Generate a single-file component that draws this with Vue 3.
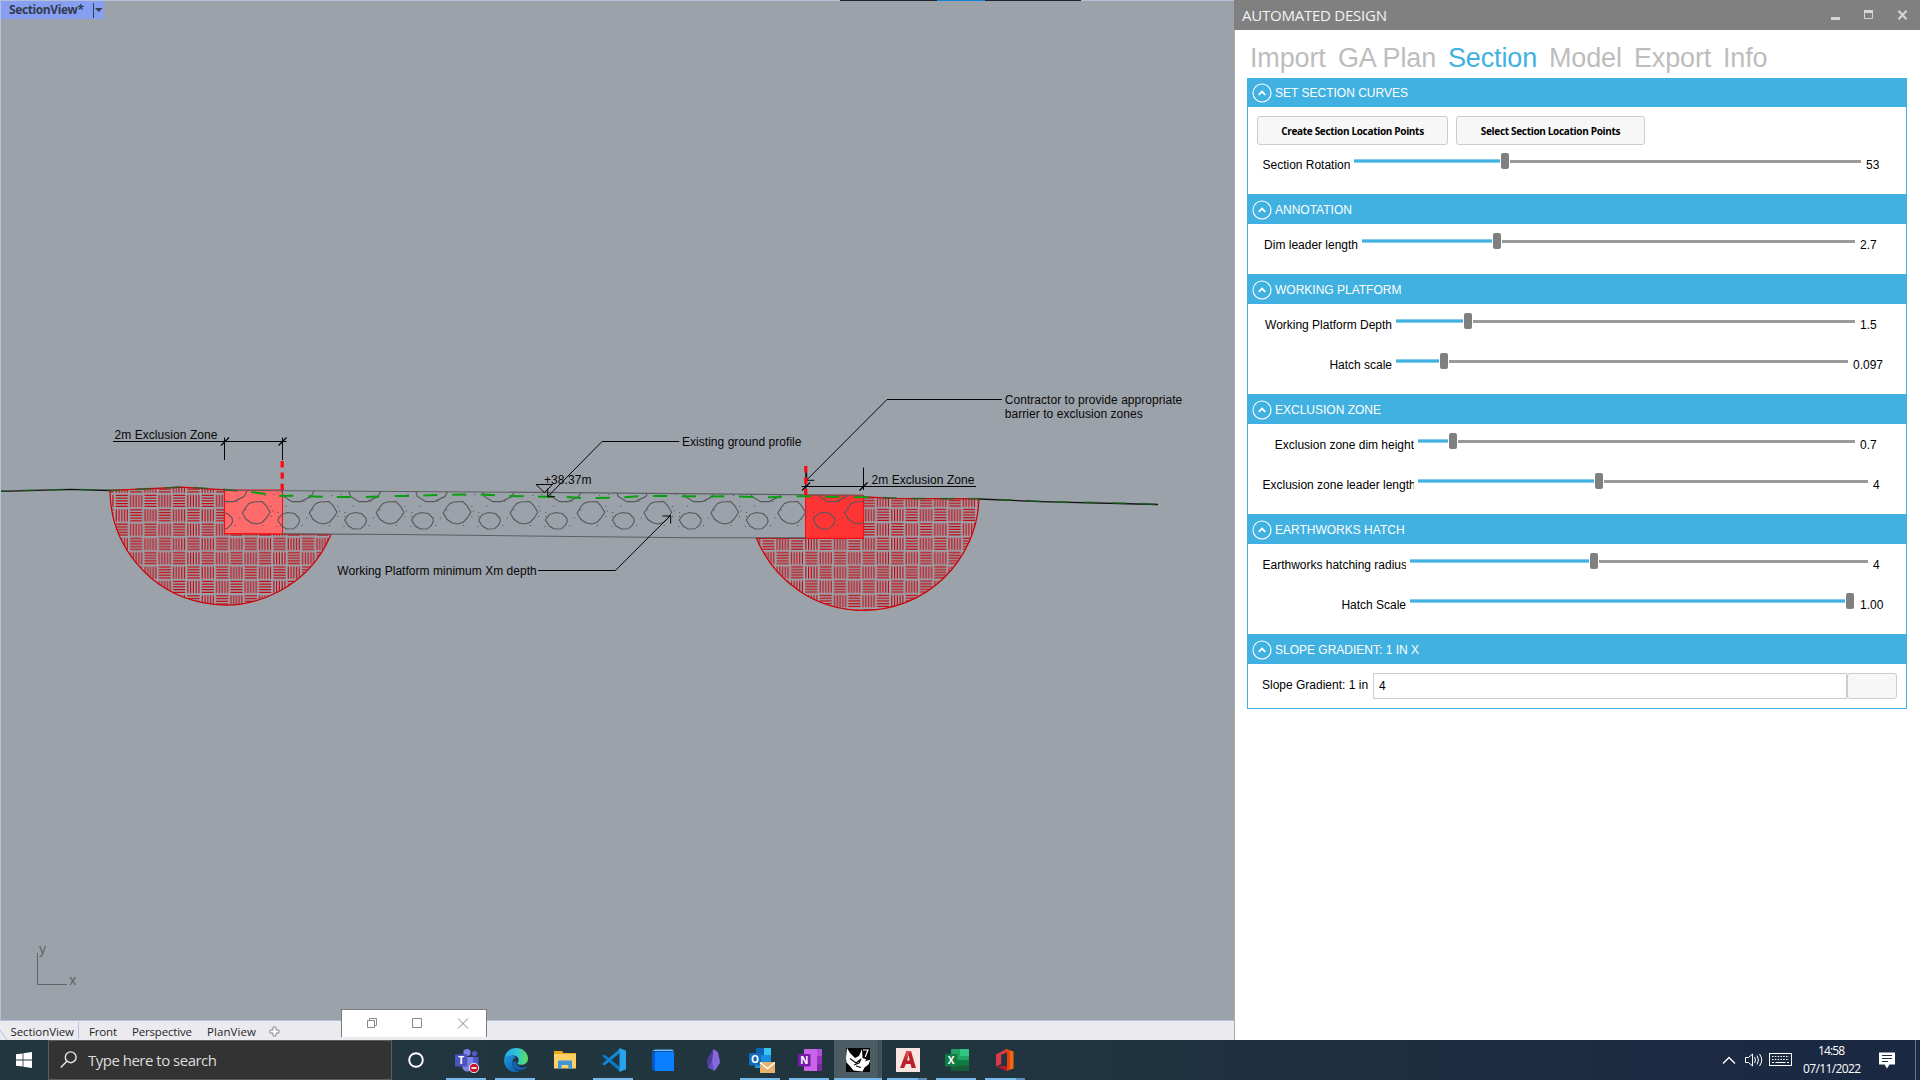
<script setup>
const tabs = [
  { name: 'Import', w: 88 }, { name: 'GA Plan', w: 110 }, { name: 'Section', w: 101, active: true },
  { name: 'Model', w: 85 }, { name: 'Export', w: 89 }, { name: 'Info', w: 60 },
]
// lw: width of the label column, track: slider length, at: thumb centre
const groups = [
  { title: 'SET SECTION CURVES', buttons: true, rows: [{ label: 'Section Rotation', lw: 106, track: 507, at: 151, value: '53' }] },
  { title: 'ANNOTATION', rows: [{ label: 'Dim leader length', lw: 114, track: 493, at: 135, value: '2.7' }] },
  { title: 'WORKING PLATFORM', rows: [
    { label: 'Working Platform Depth', lw: 148, track: 459, at: 72, value: '1.5' },
    { label: 'Hatch scale', lw: 148, track: 452, at: 48, value: '0.097' }] },
  { title: 'EXCLUSION ZONE', rows: [
    { label: 'Exclusion zone dim height', lw: 170, track: 437, at: 35, value: '0.7' },
    { label: 'Exclusion zone leader length', lw: 170, track: 450, at: 181, value: '4' }] },
  { title: 'EARTHWORKS HATCH', rows: [
    { label: 'Earthworks hatching radius', lw: 162, track: 458, at: 184, value: '4' },
    { label: 'Hatch Scale', lw: 162, track: 445, at: 440, value: '1.00' }] },
  { title: 'SLOPE GRADIENT: 1 IN X', slope: true, rows: [] },
]
const views = [{ name: 'Front', w: 28, ml: 10 }, { name: 'Perspective', w: 60, ml: 15 }, { name: 'PlanView', w: 49, ml: 15 }]
const tile = 28.67
const five = [0, 1, 2, 3, 4].map(i => 1.3 + i * 2.75)
const h = tile / 2
const stones = Array.from({ length: 11 }, (_, i) => 214.6 + i * 66.93)
const dots = [[22, 11], [59, 4], [57.5, 20.5], [4, 15.5], [-11, 26], [31, 19.5], [63, 26], [24.5, 27.5], [20, 35], [47.5, 35], [-4, 22], [56, 16], [50, 5], [-5, 36]]
const bright = [
  'M251.3 492l14.3 2', 'M279.3 496l14-.3', 'M308.3 496.3l14.4.4', 'M336.7 497h14', 'M365.7 497l13.6-.6', 'M394.7 496H409',
  'M423.3 495.6l14-.6', 'M452 494.8l14-.4', 'M480.7 494.6l14.3.7', 'M509.3 496l14.4.3', 'M538 496.7h14.3', 'M566.7 497l14.3 1',
  'M595.7 498l14.3-.3', 'M624.3 497.3l14-1', 'M653 496h14.3', 'M681.7 496.3H696', 'M710.3 496.5l14-.2', 'M739 496.6l14.3.4',
  'M768 497.3l13.7-.3', 'M796.7 496.3H811', 'M825 496.7l14.3.3', 'M854 497.3l14.3-.3',
]
const dull = [
  'M1 491h6', 'M21.7 490.5l13.3-.2', 'M50 490.2l13-.6', 'M79 489.5l14.3.5', 'M108 490.3h12', 'M136 489.3l14.7-.7', 'M165 488l15-.8',
  'M193.3 487.5l15 1', 'M223.3 489.3l14 1.5', 'M882.7 497.7l14 .3', 'M911.3 498.6h14', 'M940 498.7h14', 'M968.7 498.7h14',
  'M997.3 499.6l14.4.4', 'M1026.7 500.6l14.3.7', 'M1055 501.9l14.3.4', 'M1083.3 502.3l14.4.4', 'M1112.3 503l14.4.4', 'M1141 503.7l14 .6',
]
</script>

<template>
  <div class="screen">
    <div class="work">
      <section class="cad">
        <div class="viewport">
          <svg class="drawing" width="1233" height="1019" viewBox="1 1 1233 1019">
            <defs>
              <pattern v-for="p in [{ id: 'weaveL', x: 143.6, y: 494.1 }, { id: 'weaveR', x: 876.2, y: 536.9 }]" :id="p.id" :key="p.id" :x="p.x" :y="p.y" :width="tile" :height="tile" patternUnits="userSpaceOnUse">
                <g stroke="#c4040c" stroke-width="1.15">
                  <template v-for="o in five" :key="o">
                    <path :d="`M.7 ${o}h12.3M${h + o} .7v12.3M${o} ${h + .7}v12.3M${h + .7} ${h + o}h12.3`" />
                  </template>
                </g>
              </pattern>
              <clipPath id="platform"><path d="M224.5 490L863.5 495V538L740 537.8 224.5 533.6z" /></clipPath>
            </defs>
            <path d="M110 490.3L150 488.6 181 487.2 224.5 489.8V533.6L331 534.5A115 115 0 0 1 110 490.3z" fill="url(#weaveL)" stroke="#cc0208" stroke-width="1.2" />
            <path d="M863.5 496.5L890 498.3 979 498.8A115.400 115.400 0 0 1 863.5 610.400A115.400 115.400 0 0 1 756.5 538.3H863.5z" fill="url(#weaveR)" stroke="#cc0208" stroke-width="1.2" />
            <path d="M224.5 490H282.5V533.9L224.5 533.5z" fill="#ff6a6a" stroke="#ff0a12" />
            <path d="M805.5 495.3H863.5V538.2H805.5z" fill="#ff3434" stroke="#ff0a12" />
            <g clip-path="url(#platform)" fill="none" stroke="#54585a" stroke-width="1.1">
              <g v-for="x in stones" :key="x" :transform="`translate(${x} 490)`">
                <path d="M0 0L2 6.5 10.500 11.600H19L29.500 6.500 33 0" />
                <path d="M27.800 23L31.500 17 34.500 13.500 38.500 12 47.500 11.500 51.500 15.500 55.500 22.300 51.500 28.500 47.500 32.500 42 34 36.500 32.800 31.500 29.300z" />
                <path d="M-3.800 30L0 24.600 6 22.500 13 23.500 17.500 28 18 31.500 16 35.500 12 38.800 5 39 0 36z" />
                <rect v-for="(d, i) in dots" :key="i" :x="d[0]" :y="d[1]" width="1" height="1" fill="#4c5052" stroke="none" />
              </g>
            </g>
            <g fill="none">
              <path d="M224 490.3L540 492.4 863 495.3M282 533.8L400 534.5 550 536.2 690 537.8H806" stroke="#5c6063" stroke-width="1.15" />
              <path d="M1 491.3L70 489.3 110 490.5M979 499L1040 501.6 1158 504.5" stroke="#111" stroke-width="1.3" />
              <path v-for="d in dull" :key="d" :d="d" stroke="#1d6322" stroke-width="1.7" opacity=".8" />
              <path v-for="d in bright" :key="d" :d="d" stroke="#08a010" stroke-width="2" />
              <g stroke="#050505">
                <path d="M113 441.5H286.500M224.500 437.500V460M282.500 437.500V460M801.500 486.500H976M805.800 466V495M863.500 467.500V490" />
                <path d="M221 445.500l8-8M278.500 445.500l8-8M802 490.500l8-8M859.500 490.500l8-8" stroke-width="1.3" />
                <path d="M679.300 441.500H602L547.700 496.700M547.700 488.500V496.700H555M536 484.500H552.700L544.300 492.500z" />
                <path d="M538 570.500H615.300L670.700 515.300M662.500 516H670.700V523.500" />
                <path d="M1002 399.500H887L806.700 480M814.300 480.300H806.700V472.500" />
              </g>
              <path d="M282.200 461V490M805.800 466V495" stroke="#fe0810" stroke-width="3.2" stroke-dasharray="6.4 5" />
              <path d="M37.500 953V984.500H67" stroke="#606467" />
            </g>
            <g class="notes">
              <text x="114.5" y="438.500" textLength="103">2m Exclusion Zone</text>
              <text x="682" y="446.300" textLength="119.5">Existing ground profile</text>
              <text x="544" y="484.300" textLength="47.5">+38.37m</text>
              <text x="337.3" y="574.800" textLength="199.5">Working Platform minimum Xm depth</text>
              <text x="1004.800" y="404" textLength="177.5">Contractor to provide appropriate</text>
              <text x="1004.800" y="418" textLength="138">barrier to exclusion zones</text>
              <text x="871.500" y="483.700" textLength="103">2m Exclusion Zone</text>
              <g class="axis"><text x="39" y="954">y</text><text x="69.2" y="985">x</text></g>
            </g>
          </svg>
          <div class="tag"><svg width="103" height="18"><text x="8" y="13" textLength="75">SectionView*</text><path d="M92.500 2v15" stroke="#333b55" /><path d="M94 7h7.500l-3.700 4z" fill="#333b55" /></svg></div>
          <div class="peek"><i /></div>
        </div>
        <div class="views">
          <svg class="notch" width="10" height="19"><path d="M0 9l7 10" stroke="#b6bfdc" fill="none" /></svg>
          <svg class="view first" width="68" height="19"><text x="-.5" y="15" textLength="63.5">SectionView</text><path d="M67.500 1v17" stroke="#b6bfdc" /></svg>
          <svg v-for="v in views" :key="v.name" class="view" :width="v.w" height="19" :style="{ marginLeft: v.ml + 'px' }"><text x="0" y="15" :textLength="v.w">{{ v.name }}</text></svg>
          <svg class="plus" width="11" height="11"><path d="M4 1h3v3h3v3H7v3H4V7H1V4h3z" fill="#fff" stroke="#85878c" /></svg>
        </div>
        <div class="mini">
          <svg width="145" height="27" fill="none" stroke="#85888c">
            <path d="M25.500 10.500h7v7h-7zM27.500 10V8.500h7v7h-2M70.500 8.500h9v9h-9z" /><path d="M116 8.500l10 10M126 8.500l-10 10" />
          </svg>
        </div>
      </section>

      <aside class="panel">
        <header class="title">
          <svg width="170" height="30"><text x="8" y="20.700" textLength="145">AUTOMATED DESIGN</text></svg>
          <svg width="94" height="30" fill="none" stroke="#d5d5d5"><path d="M5 18.500h9" stroke-width="3" /><path d="M38.500 10.500h8v8h-8z" stroke-width="1" /><path d="M38 11.500h9" stroke-width="3" /><path d="M72.500 10.800l8 8.400M80.500 10.800l-8 8.400" stroke-width="2" /></svg>
        </header>
        <nav class="tabs">
          <a v-for="t in tabs" :key="t.name" :class="{ active: t.active }" :style="{ width: t.w + 'px' }">{{ t.name }}</a>
        </nav>
        <div class="groups">
          <section v-for="g in groups" :key="g.title" class="group">
            <header class="bar" :class="{ short: g.buttons }">
              <svg width="20" height="20" fill="none" stroke="#fff"><circle cx="10" cy="10" r="9" stroke-width="1.1" /><path d="M6.700 11.800L10 8.500l3.300 3.300" stroke-width="1.8" /></svg>
              <span>{{ g.title }}</span>
            </header>
            <div v-if="g.buttons" class="btns">
              <button class="b1">Create Section Location Points</button><button class="b2">Select Section Location Points</button>
            </div>
            <div v-for="r in g.rows" :key="r.label" class="row">
              <span class="label" :style="{ width: r.lw - 18.5 + 'px' }">{{ r.label }}</span>
              <div class="track" :style="{ width: r.track + 'px' }">
                <div class="fill" :style="{ width: r.at - 5 + 'px' }" /><div class="thumb" /><div class="rest" />
              </div>
              <span class="value">{{ r.value }}</span>
            </div>
            <div v-if="g.slope" class="slope">
              <span>Slope Gradient: 1 in</span><div class="field">4</div><button />
            </div>
            <div v-else class="foot" />
          </section>
        </div>
      </aside>
    </div>

    <footer class="taskbar">
      <div class="start"><svg width="16" height="16" fill="#fff"><path d="M0 2.300l6.600-.9v6.200H0zM7.400 1.300L16 0v7.600H7.400zM0 8.400h6.600v6.200L0 13.700zM7.400 8.400H16V16l-8.600-1.300z" /></svg></div>
      <div class="search">
        <svg width="18" height="18" fill="none" stroke="#e8e8e8" stroke-width="1.4"><circle cx="10.700" cy="6.300" r="5.4" /><path d="M6.800 10.200L.8 16.400" /></svg>
        <svg width="140" height="38"><text x="0" y="25" textLength="129">Type here to search</text></svg>
      </div>
      <div class="app cortana"><svg width="24" height="24"><circle cx="11" cy="12" r="6.8" fill="none" stroke="#fff" stroke-width="1.9" /></svg></div>
      <div class="app run"><svg width="26" height="26"><circle cx="13" cy="5.500" r="3.6" fill="#7b83eb" /><circle cx="20.600" cy="6.600" r="2.6" fill="#5059c9" /><path d="M17 10h7.500v7a4 4 0 0 1-7.500 2z" fill="#5059c9" /><path d="M8 10h11v9a5.500 5.500 0 0 1-11 0z" fill="#7b83eb" /><rect x="1" y="7.300" width="12.300" height="12.300" rx="1" fill="#4b53bc" /><text x="7.200" y="17" class="glyph">T</text><circle cx="20" cy="21" r="4.7" fill="#c50f2c" stroke="#eee" /><path d="M17.400 21h5.200" stroke="#fff" stroke-width="1.7" /></svg></div>
      <div class="app run"><svg width="24" height="24">
        <defs><linearGradient id="eg" x1="0" x2="1"><stop offset="0" stop-color="#24a5e5" /><stop offset=".5" stop-color="#2cc2da" /><stop offset="1" stop-color="#5de05d" /></linearGradient><linearGradient id="eb" x1="0" x2="1" y2="1"><stop offset="0" stop-color="#1b9de2" /><stop offset="1" stop-color="#0b53a4" /></linearGradient></defs>
        <path d="M0 12A12 12 0 0 0 16.500 23.400C11 23 8 19 8.200 15c.2-3.600 2-5 3.800-5.700C8 6 1 7 0 12z" fill="url(#eb)" />
        <path d="M0 11.500C1 4 6 0 12 0c7 0 12 5 12 10.500 0 4-3 6.300-6.500 6.300-3 0-4.500-1-3.800-2 2-2.500 1-7-4-7.300C5 7 1 9 0 11.500z" fill="url(#eg)" />
        <path d="M8.200 14c-.5 6 5 10 12.500 7 1-.5 2-1.800 2-2.300-5 2-10 .3-10.500-5.200z" fill="#1262b3" /></svg></div>
      <div class="app"><svg width="24" height="24"><path d="M1 3h8l1.500 2H23v15H1z" fill="#e9a71c" /><path d="M1 6h22v14.500H1z" fill="#fed166" /><path d="M5 21v-7.500q0-1 1-1h12q1 0 1 1V21h-3.600v-4H8.600v4z" fill="#3f96d8" /></svg></div>
      <div class="app run"><svg width="24" height="24"><path d="M0 8l2.500-1.500L18 19v4.500z" fill="#0a79c4" /><path d="M0 16l2.500 1.500L18 5V.5z" fill="#1088d4" /><path d="M17.500 0L24 2.800v18.400L17.500 24z" fill="#27a3ef" /></svg></div>
      <div class="app"><svg width="24" height="24"><path d="M1 3l3-1.500h17l2 1.500z" fill="#6cbcff" /><path d="M1 3l3 1.500V23l-3-1.500z" fill="#0458c8" /><path d="M4 3.500h19V23H4z" fill="#0880ff" /></svg></div>
      <div class="app"><svg width="24" height="24"><path d="M13.500 1L18 4.500l2 10-5.500 8.500L8 19.500 7 12z" fill="#6a4fc2" /><path d="M13.500 1L12 13l2.500 10L20 14.500l-2-10z" fill="#8468dc" /><path d="M7 12l6.500-11L12 13 8 19.500z" fill="#503a9e" /></svg></div>
      <div class="app run"><svg width="28" height="26"><rect x="9" y="1" width="15" height="20" fill="#1490df" /><path d="M9 1h8v7H9z" fill="#0a63b5" /><path d="M17 1h7v7h-7z" fill="#39c5f2" /><path d="M8 16h17v5H8z" fill="#1a9ee2" /><rect x="2" y="6" width="12" height="12.500" rx="1" fill="#0f6cbd" /><text x="8" y="16" class="glyph">O</text><path d="M13 15h15v11H13z" fill="#eab16c" /><path d="M13 15.500l7.500 6 7.500-6" fill="none" stroke="#fff" stroke-width="1.4" /></svg></div>
      <div class="app run"><svg width="24" height="24"><rect x="6" y="1" width="18" height="22" rx="1" fill="#ca64ea" /><path d="M19 1h5v7h-5z" fill="#b24fd8" /><path d="M19 8h5v8h-5z" fill="#9332bf" /><path d="M19 16h5v7h-5z" fill="#7b2aa5" /><rect x="0" y="6" width="12.500" height="12.500" rx="1" fill="#7719aa" /><text x="6.200" y="16" class="glyph">N</text></svg></div>
      <div class="app run current"><svg width="24" height="24"><path d="M0 0h24v24H0z" fill="#050505" /><path d="M1 0L4 5l5 5 4-2 3-7 .5 9 4 1.500-2 2 6-2-2 5-4 3-2 4-9-1-4-5-3-3L0 10z" fill="#fff" /><path d="M4 10.500l6 4.500 5-4-2 4-5 2M10 18l5 1.500" stroke="#111" stroke-width="1.2" fill="none" /><path d="M17 2h5l-2.800 7" fill="none" stroke="#fff" stroke-width="1.2" /></svg></div>
      <div class="app run multi"><svg width="24" height="24"><path d="M0 0h24v24H0z" fill="#f9e5df" /><path d="M4 20L10.500 3H15l5 17h-4.500l-1-4H10l-2 4zM11 12.500h2.700L12.600 7z" fill="#b8222c" fill-rule="evenodd" /><path d="M10.500 3H15l-6 9z" fill="#e04a46" /></svg></div>
      <div class="app run"><svg width="24" height="24"><rect x="6" y="1" width="18" height="22" rx="1" fill="#21a366" /><path d="M15 1h9v7h-9z" fill="#33c481" /><path d="M6 12h18v10q0 1-1 1H6z" fill="#107c41" /><path d="M6 17.500h18V22q0 1-1 1H6z" fill="#185c37" /><rect x="0" y="6" width="12.500" height="12.500" rx="1" fill="#107c41" /><text x="6.200" y="16" class="glyph">X</text></svg></div>
      <div class="app run multi"><svg width="22" height="24"><path d="M1 6.500L11 1v4L6.500 7v9L1 18.500z" fill="#d63b4c" /><path d="M11 1l7.500 2.500v17L11 23z" fill="#f06a13" /><path d="M11 1l4 1.200v19.600L11 23z" fill="#e5420b" /><path d="M1 18.500L6.500 18H12v5z" fill="#b01c28" /><path d="M6.500 7l5.500-2.500V18H6.500z" fill="#223540" /></svg></div>
      <div class="tray">
        <svg class="sys" width="74" height="40" fill="none" stroke="#fff"><path d="M1 23.500l6-6 6 6" stroke-width="1.4" />
          <path d="M23.500 17.500h3l4-3.500v12l-4-3.500h-3zM32.500 17q2 3 0 6M35 15.500q3 4.500 0 9M37.500 14q4.500 6 0 12" />
          <rect x="47.500" y="13.500" width="22" height="12" /><path d="M50 16.500h17M50 19.500h17" stroke-dasharray="1.5 1.3" /><path d="M50 22.500h2M53.500 22.500h10M65 22.500h2" /></svg>
        <svg class="clock" width="62" height="40"><text x="16" y="14.700" textLength="27">14:58</text><text x="1" y="32.700" textLength="58">07/11/2022</text></svg>
        <svg class="note" width="17" height="17"><path d="M0 .5h16v12h-5.500L8 16.500 5.500 12.500H0z" fill="#fff" /><path d="M3 3.500h10M3 6.500h10M3 9.500h6" stroke="#1b2b42" /></svg>
        <div class="desk" />
      </div>
    </footer>
  </div>
</template>

<style>
body { margin: 0; overflow: hidden; }
</style>
<style scoped>
.screen { width: 1920px; height: 1080px; display: flex; flex-direction: column; background: #fff; font-family: "Liberation Sans", Arial, sans-serif; overflow: hidden; }
svg { display: block; flex: none; }
.work { display: flex; height: 1040px; }
.cad { width: 1234px; position: relative; display: flex; flex-direction: column; background: #ebebef; }
.viewport { height: 1019px; border: solid #b6bfdc; border-width: 1px 0 1px 1px; background: #9ca2aa; position: relative; }
.notes { font-size: 12px; fill: #080808; }
.axis { font-size: 14px; fill: #606467; }
.tag { position: absolute; left: 0; top: 0; background: #869ff0; }
.tag text { font: bold 12px "Open Sans", "Noto Sans", sans-serif; fill: #333b4e; }
.peek { position: absolute; left: 839px; top: -1px; width: 241px; height: 1px; background: #20242c; display: flex; justify-content: center; }
.peek i { width: 48px; background: #1683d8; }
.views { height: 19px; display: flex; align-items: center; font: 11.5px "Open Sans", "Noto Sans", sans-serif; }
.view { overflow: visible; }
.view text { fill: #24262a; }
.views .first { margin-left: 1px; }
.plus { margin: 2px 0 0 13px; }
.mini { position: absolute; left: 341px; top: 1009px; width: 144px; height: 27px; border: 1px solid #777b82; border-bottom: 0; background: #fff; }
.panel { width: 685px; border-left: 1px solid #aaa; display: flex; flex-direction: column; }
.title { height: 30px; background: #808080; display: flex; justify-content: space-between; margin-left: -1px; }
.title text { font: 15px "Open Sans", "Noto Sans", sans-serif; fill: #f3f3f3; }
.tabs { height: 48px; display: flex; padding-left: 15px; font-size: 27px; letter-spacing: -.15px; color: #bdbdbd; line-height: 57px; white-space: nowrap; }
.tabs a { flex: none; }
.tabs .active { color: #41b1e1; }
.groups { margin: 0 13px 0 12px; width: 658px; border: 1px solid #41b1e1; border-top: 0; }
.bar { height: 30px; box-sizing: border-box; background: #41b1e1; display: flex; align-items: center; gap: 3px; padding: 1px 0 0 4px; color: #fff; font-size: 12px; }
.bar.short { height: 29px; }
.btns { height: 29px; padding: 9px 0 0 9px; display: flex; gap: 8px; margin-bottom: -1px; }
button { box-sizing: border-box; border: 1px solid #ccc; background: #f7f7f7; border-radius: 3px; padding: 1px 0 0; font: bold 10px "Open Sans", "Noto Sans", sans-serif; letter-spacing: -.32px; white-space: nowrap; color: #000; }
.b1 { width: 191px; } .b2 { width: 189px; }
.row { height: 40px; display: flex; align-items: flex-start; font-size: 12px; color: #000; }
.label { margin: 14px 4px 0 14.5px; line-height: 14px; text-align: right; white-space: nowrap; overflow: hidden; letter-spacing: -.01px; flex: none; }
.track { height: 34px; display: flex; align-items: center; flex: none; }
.fill { height: 2px; border: solid #86cdeb; border-width: 1px 0; background: #41b1e1; }
.thumb { width: 8px; height: 16px; margin: 0 1px; background: #808080; border-radius: 2px; flex: none; }
.rest { flex: 1; height: 3px; background: #999; }
.value { margin: 14px 0 0 5px; line-height: 14px; }
.foot { height: 10px; }
.slope { height: 44px; display: flex; padding: 9px 9px 0 14px; box-sizing: border-box; font-size: 12px; }
.slope span { width: 111px; line-height: 24px; white-space: nowrap; }
.field { flex: 1; height: 24px; border: 1px solid #ccc; padding-left: 5px; line-height: 25px; }
.slope button { width: 50px; height: 26px; }
.taskbar { height: 40px; display: flex; background: linear-gradient(90deg, #22363f 0, #21353f 50%, #1b2a42 88%, #1a2842); }
.start { width: 48px; display: flex; align-items: center; justify-content: center; }
.search { width: 331px; height: 38px; border: 1px solid #5d5d5d; background: #333; display: flex; align-items: center; padding-left: 11px; gap: 10px; }
.search text { font: 15px "Open Sans", "Noto Sans", sans-serif; fill: #ddd; }
.app { width: 49px; height: 40px; display: flex; align-items: center; justify-content: center; position: relative; flex: none; }
.cortana { width: 50px; }
.run::after { content: ""; position: absolute; left: 4px; bottom: 0; width: 40px; height: 2px; background: #76b9ed; }
.current { background: linear-gradient(90deg, #4b5c64 44px, #2d3e47 44px, #43535b 45px); width: 48px; box-sizing: border-box; margin-right: 1px; }
.current::after { left: 0; width: 48px; }
.multi::after { background: linear-gradient(90deg, #76b9ed 31px, #5d8dbb 31px); }
.glyph { font: bold 10px "Open Sans", sans-serif; fill: #fff; text-anchor: middle; }
.tray { margin-left: auto; display: flex; align-items: center; }
.sys { margin-right: 1px; }
.clock { margin-left: 5px; }
.clock text { font: 12px "Open Sans", "Noto Sans", sans-serif; fill: #fff; }
.note { margin: 0 19px 0 15px; }
.desk { width: 4px; height: 40px; border-left: 1px solid #6c7585; }
</style>
